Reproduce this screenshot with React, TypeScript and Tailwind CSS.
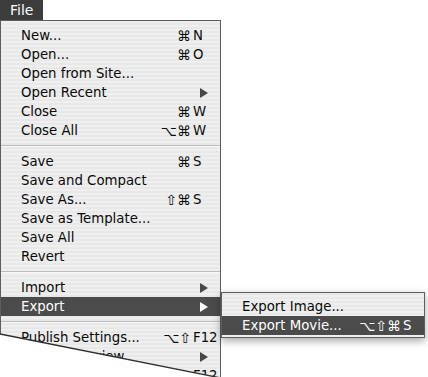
import React from "react";

type Item =
  | { sep: true }
  | { sep?: false; label: string; mods?: string; k?: string; arrow?: boolean; active?: boolean };

const items: Item[] = [
  { label: "New...", mods: "⌘", k: "N" },
  { label: "Open...", mods: "⌘", k: "O" },
  { label: "Open from Site..." },
  { label: "Open Recent", arrow: true },
  { label: "Close", mods: "⌘", k: "W" },
  { label: "Close All", mods: "⌥⌘", k: "W" },
  { sep: true },
  { label: "Save", mods: "⌘", k: "S" },
  { label: "Save and Compact" },
  { label: "Save As...", mods: "⇧⌘", k: "S" },
  { label: "Save as Template..." },
  { label: "Save All" },
  { label: "Revert" },
  { sep: true },
  { label: "Import", arrow: true },
  { label: "Export", arrow: true, active: true },
  { sep: true },
  { label: "Publish Settings...", mods: "⌥⇧", k: "F12" },
  { label: "Publish Preview", arrow: true },
  { label: "Publish", mods: "⇧", k: "F12" },
];

function Arrow({ light }: { light?: boolean }) {
  return (
    <svg width="8" height="10" viewBox="0 0 8 10" className="mr-[12px] shrink-0">
      <path d="M0 0 L8 5 L0 10 Z" fill={light ? "#ffffff" : "#474747"} />
    </svg>
  );
}

function Row({ it }: { it: Exclude<Item, { sep: true }> }) {
  const active = !!it.active;
  return (
    <div
      className={
        "flex h-[19px] items-center pl-[20px] whitespace-nowrap " +
        (active ? "bg-[#4b4b4b] text-white" : "text-[#0a0a0a]")
      }
    >
      <span className="flex-1">{it.label}</span>
      {it.arrow ? (
        <Arrow light={active} />
      ) : it.k ? (
        <>
          <span className="text-right text-[14px]">{it.mods}</span>
          <span className="w-[15px] ml-[2px] mr-[12px] whitespace-nowrap">{it.k}</span>
        </>
      ) : null}
    </div>
  );
}

export default function App() {
  return (
    <div className="relative w-[428px] h-[377px] overflow-hidden bg-white font-['DejaVu_Sans',sans-serif] text-[13.3px] leading-none">
      <div className="flex h-[20px] w-[43px] items-center bg-[#3c3c3c] pl-[10px] text-[14px] text-white">
        File
      </div>
      <div className="w-[221px] border border-[#5e5e5e] pt-[5px] pb-[10px] bg-[repeating-linear-gradient(0deg,#efefef_0px,#efefef_2px,#e8e8e8_2px,#e8e8e8_4px)] [clip-path:polygon(0_0,100%_0,100%_358px,0_314px)]">
        {items.map((it, i) =>
          it.sep ? (
            <div key={i} className="flex h-[12px] flex-col justify-center">
              <div className="h-px bg-[#bcbcbc]" />
              <div className="h-px bg-[#f8f8f8]" />
            </div>
          ) : (
            <Row key={i} it={it} />
          )
        )}
      </div>
      <svg className="absolute left-0 top-0" width="428" height="377">
        <line x1="0" y1="334" x2="221" y2="378" stroke="#2e2e2e" strokeWidth="1.3" />
      </svg>
      <div className="absolute left-[221px] top-[292px] w-[204px] border border-[#5e5e5e] pt-[4px] pb-[2px] bg-[repeating-linear-gradient(0deg,#efefef_0px,#efefef_2px,#e8e8e8_2px,#e8e8e8_4px)] shadow-[0_3px_8px_rgba(0,0,0,0.35)]">
        <div className="flex h-[19px] items-center pl-[20px] text-[#0a0a0a] whitespace-nowrap">
          <span className="flex-1">Export Image...</span>
        </div>
        <div className="flex h-[19px] items-center pl-[20px] bg-[#4b4b4b] text-white whitespace-nowrap">
          <span className="flex-1">Export Movie...</span>
          <span className="text-right text-[14px]">⌥⇧⌘</span>
          <span className="w-[12px] ml-[2px] mr-[9px]">S</span>
        </div>
      </div>
    </div>
  );
}
